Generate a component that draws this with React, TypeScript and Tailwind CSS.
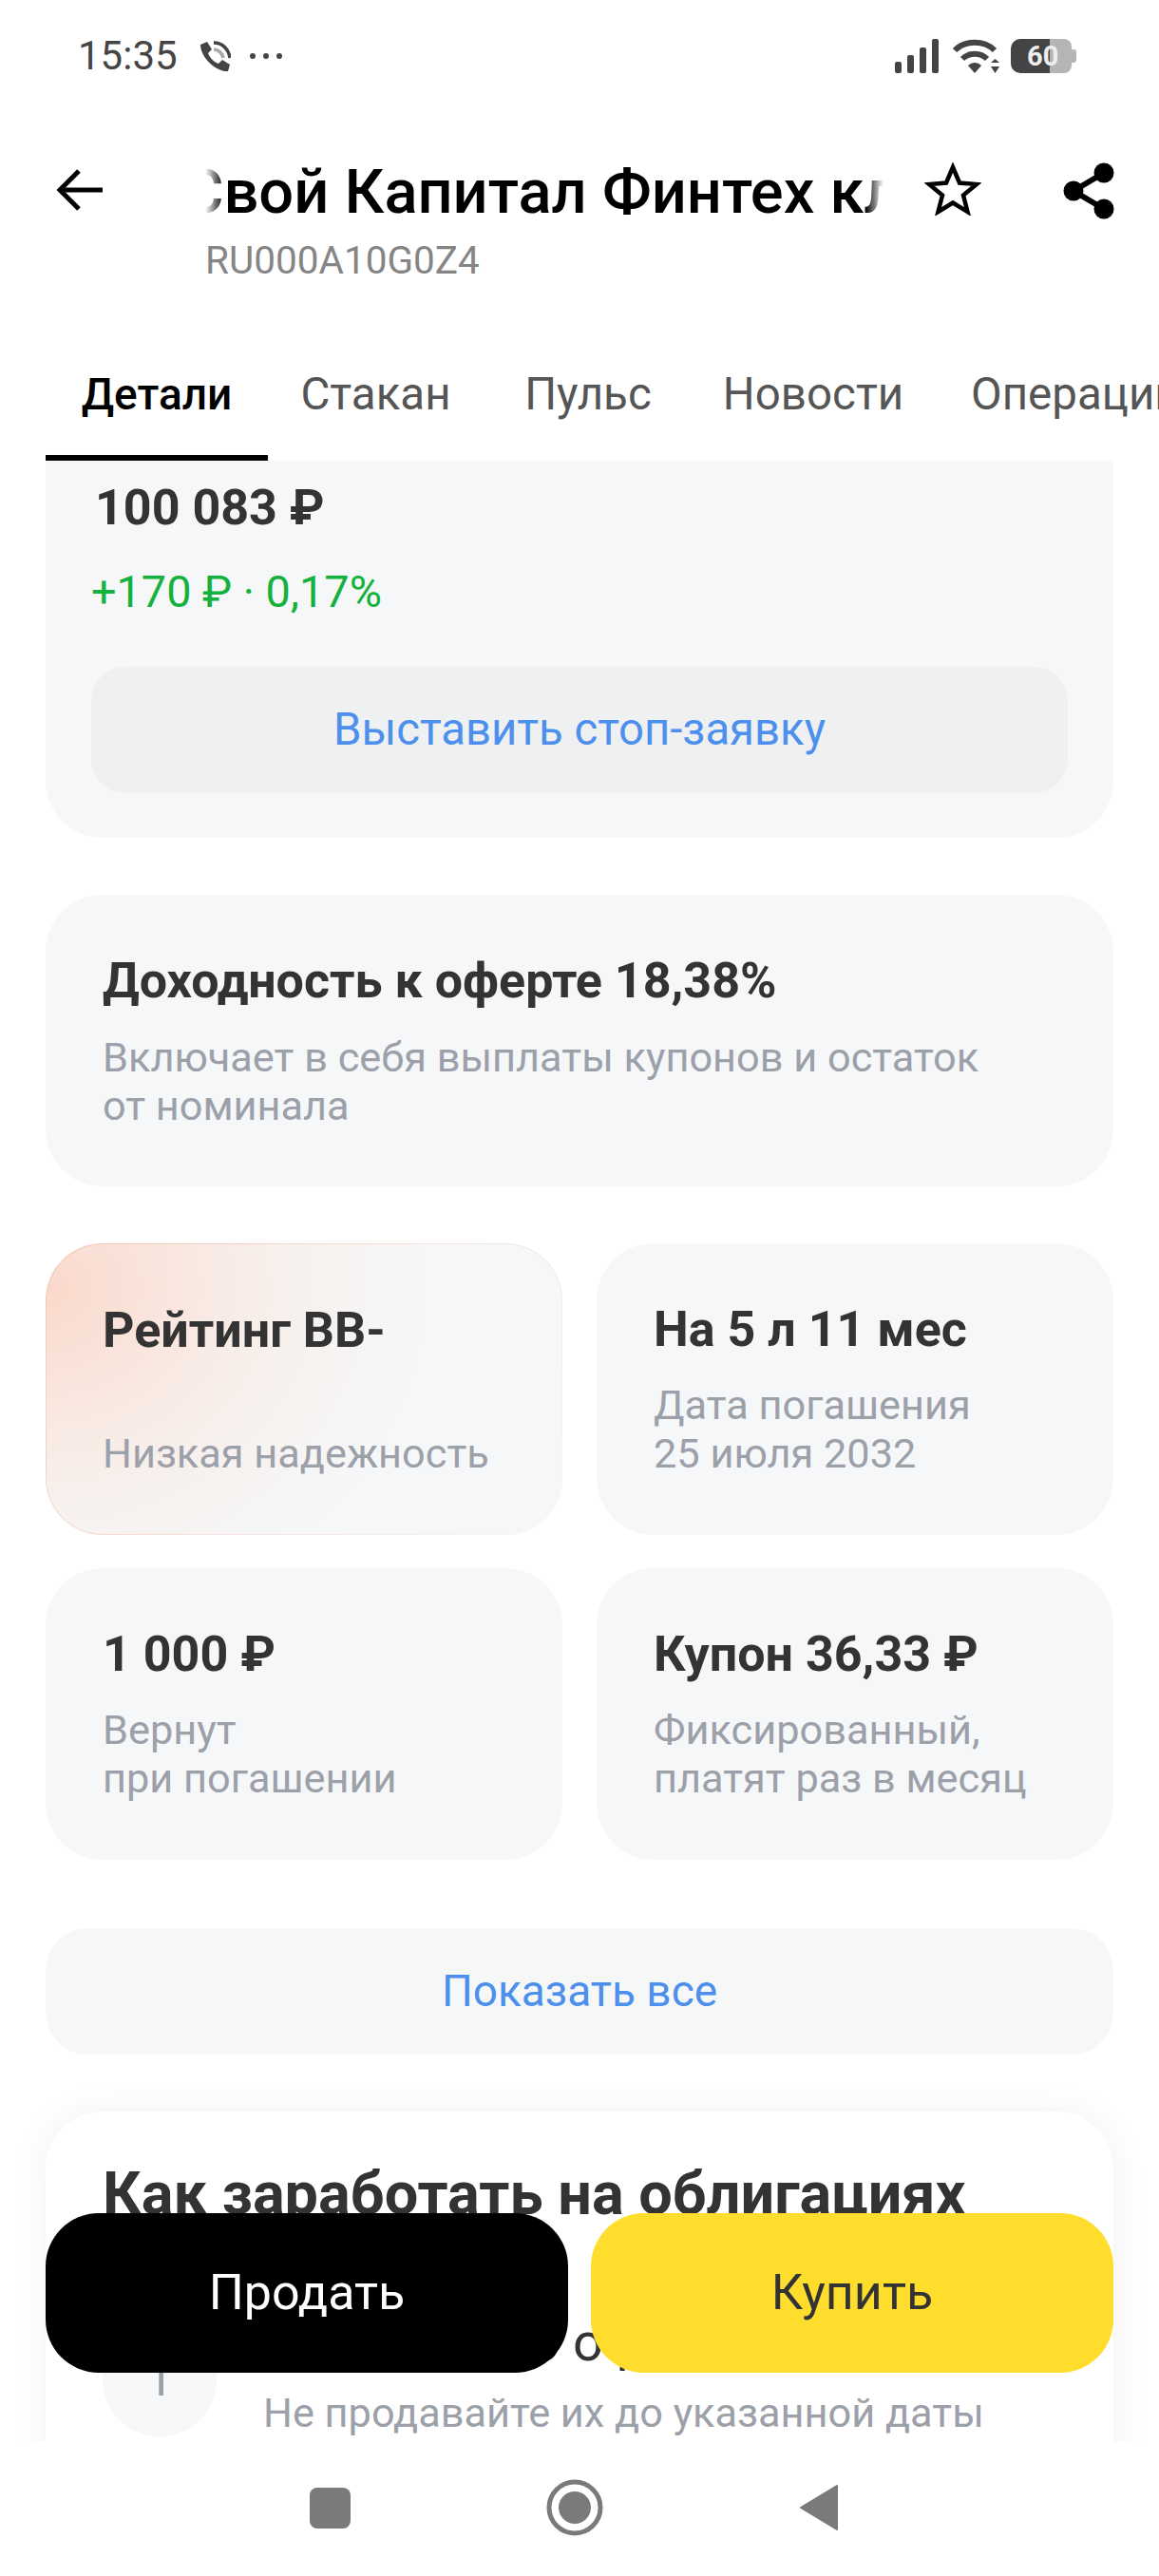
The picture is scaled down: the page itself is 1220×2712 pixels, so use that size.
import React from "react";

const font = "font-['Roboto','Noto_Sans',sans-serif]";

function CallIcon() {
  return (
    <svg width="33" height="33" viewBox="0 0 33 33" className="ml-[23px]">
      <path d="M1 4 L8 1 L13 9 L9 13 C11 18 15 22 20 24 L24 20 L32 25 L30 32 C18 33 1 18 1 4 Z" fill="#444" />
      <path d="M15 2 C24 2 31 9 32 18" stroke="#444" strokeWidth="3.5" fill="none" />
      <path d="M15 9 C20 9 24 13 25 18" stroke="#aaa" strokeWidth="3.5" fill="none" />
    </svg>
  );
}

function SignalIcon() {
  return (
    <svg width="46" height="36" viewBox="0 0 46 36">
      <rect x="0" y="24" width="7" height="12" rx="2" fill="#444" />
      <rect x="13" y="17" width="7" height="19" rx="2" fill="#444" />
      <rect x="26" y="9" width="7" height="27" rx="2" fill="#444" />
      <rect x="39" y="0" width="7" height="36" rx="2" fill="#444" />
    </svg>
  );
}

function WifiIcon() {
  return (
    <svg width="50" height="36" viewBox="0 0 50 36">
      <path d="M3 12 C14 1 34 1 45 12" stroke="#444" strokeWidth="6" fill="none" />
      <path d="M11 21 C18 14 30 14 37 21" stroke="#444" strokeWidth="6" fill="none" />
      <path d="M17 28 C21 24 27 24 31 28 L24 36 Z" fill="#444" />
      <path d="M41 25 L45.500 21 L50 25 Z M41 29 L50 29 L45.500 36 Z" fill="#444" />
    </svg>
  );
}

function BatteryIcon() {
  return (
    <div className="relative ml-[12px] flex h-[36px] w-[69px] items-center">
      <div className="h-full w-[41px] rounded-l-[10px] bg-[#444]" />
      <div className="h-full w-[23px] rounded-r-[8px] bg-[#b5b5b5]" />
      <div className="h-[14px] w-[5px] rounded-r-[3px] bg-[#b5b5b5]" />
      <span className="absolute left-[17px] top-0 text-[29px] leading-[36px] font-bold text-[#eee]">60</span>
    </div>
  );
}

function BackIcon() {
  return (
    <svg width="48" height="44" viewBox="0 0 48 44" fill="none" stroke="#000" strokeWidth="5">
      <path d="M23 2 L3 22 L23 42" />
      <path d="M3 22 L48 22" />
    </svg>
  );
}

function StarIcon() {
  return (
    <svg width="60" height="56" viewBox="0 0 60 56" fill="none" stroke="#000" strokeWidth="4.500">
      <path d="M30 5 L37 21.500 L55 23 L41 34.500 L45.500 52 L30 42.500 L14.500 52 L19 34.500 L5 23 L23 21.500 Z" />
    </svg>
  );
}

function ShareIcon() {
  return (
    <svg width="54" height="60" viewBox="0 0 54 60">
      <path d="M43 11 L11 30 L43 49" stroke="#000" strokeWidth="6" fill="none" />
      <circle cx="43" cy="11" r="10.500" fill="#000" />
      <circle cx="11" cy="30" r="10.500" fill="#000" />
      <circle cx="43" cy="49" r="10.500" fill="#000" />
    </svg>
  );
}

function InfoCard({ title, lines, gradient }: { title: string; lines: string[]; gradient?: boolean }) {
  return (
    <div
      className={`flex h-[307px] flex-col rounded-[60px] pt-[61px] ${
        gradient
          ? "border-[1.5px] border-transparent pl-[59px] [background:radial-gradient(ellipse_400px_350px_at_0%_15%,#fad9cb_0%,#f9e7e0_35%,#f7f1ee_65%,#f6f7f9_100%)_padding-box,linear-gradient(135deg,#f3c4b0,#f6e4dc_55%,#f6f7f9)_border-box]"
          : "bg-[#f6f7f9] pl-[60px]"
      }`}
    >
      <div className="whitespace-nowrap text-[52px] leading-[60px] font-bold text-[#333]">{title}</div>
      <div className={`text-[43.300px] leading-[51px] text-[#9ca0a9] ${gradient ? "mt-[74px]" : "mt-[24px]"}`}>
        {lines.map((l) => (
          <div key={l} className="whitespace-nowrap">{l}</div>
        ))}
      </div>
    </div>
  );
}

export default function App() {
  const tabs = [
    { name: "Детали", w: "w-[234px] text-center text-[46px]" },
    { name: "Стакан", w: "w-[227px] text-center text-[47.500px]" },
    { name: "Пульс", w: "w-[220px] text-center text-[47.500px]" },
    { name: "Новости", w: "w-[254px] text-center text-[47.500px]" },
    { name: "Операции", w: "w-[300px] pl-[39px] text-left text-[47.500px]" },
  ];

  return (
    <div className={`relative flex h-[2712px] w-[1220px] flex-col overflow-hidden bg-white ${font}`}>
      {/* status bar */}
      <div className="flex h-[118px] shrink-0 items-center justify-between pl-[82px] pr-[87px]">
        <div className="flex items-center">
          <span className="text-[42px] leading-none text-[#444]">15:35</span>
          <CallIcon />
          <div className="ml-[20px] flex gap-[8px]">
            <span className="size-[6px] rounded-full bg-[#444]" />
            <span className="size-[6px] rounded-full bg-[#444]" />
            <span className="size-[6px] rounded-full bg-[#444]" />
          </div>
        </div>
        <div className="flex items-center">
          <SignalIcon />
          <div className="ml-[14px]"><WifiIcon /></div>
          <BatteryIcon />
        </div>
      </div>

      {/* header */}
      <div className="flex h-[180px] shrink-0 items-start">
        <div className="ml-[60px] mt-[60px] shrink-0"><BackIcon /></div>
        <div className="ml-[108px] w-[714px] shrink-0">
          <div className="mt-[46px] overflow-hidden [mask-image:linear-gradient(to_right,transparent,black_20px,black_695px,transparent)]">
            <div className="-ml-[23px] whitespace-nowrap text-[65px] leading-[76px] font-medium text-black">
              Свой Капитал Финтех клуб
            </div>
          </div>
          <div className="mt-[11px] text-[40.500px] leading-[46px] text-[#858585]">RU000A10G0Z4</div>
        </div>
        <div className="ml-[43px] mt-[53px] shrink-0"><StarIcon /></div>
        <div className="ml-[86px] mt-[53px] shrink-0"><ShareIcon /></div>
      </div>

      {/* tabs */}
      <div className="flex h-[187px] shrink-0 items-end overflow-hidden pl-[48px]">
        {tabs.map((t, i) => (
          <div
            key={t.name}
            className={`${t.w} h-[107px] shrink-0 whitespace-nowrap pt-[10px] leading-[54px] ${
              i === 0 ? "border-b-[6px] border-black font-medium text-black" : "text-[#555]"
            }`}
          >
            {t.name}
          </div>
        ))}
      </div>

      {/* scroll content */}
      <div className="flex min-h-0 flex-1 flex-col overflow-hidden px-[48px]">
        <div className="shrink-0 rounded-b-[60px] bg-[#f5f7f9] px-[48px] pb-[47px]">
          <div className="pl-[4px] pt-[20px] text-[52px] leading-[60px] font-bold text-[#333]">100 083 ₽</div>
          <div className="mt-[31px] text-[46.800px] leading-[54px] text-[#12b23c]">+170 ₽ · 0,17%</div>
          <div className="mt-[52px] flex h-[133px] items-center justify-center rounded-[36px] bg-[#eef0f2] text-[47.300px] text-[#4d8fec]">
            Выставить стоп-заявку
          </div>
        </div>

        <div className="mt-[60px] h-[307px] shrink-0 rounded-[60px] bg-[#f5f7f9] px-[60px] pt-[61px]">
          <div className="whitespace-nowrap text-[52px] leading-[60px] font-bold text-[#333]">Доходность к оферте 18,38%</div>
          <div className="mt-[25px] text-[43.300px] leading-[51px] whitespace-nowrap text-[#9ca0a9]">
            Включает в себя выплаты купонов и остаток
            <br />
            от номинала
          </div>
        </div>

        <div className="mt-[60px] grid shrink-0 grid-cols-2 gap-x-[36px] gap-y-[35px]">
          <InfoCard title="Рейтинг BB-" lines={["Низкая надежность"]} gradient />
          <InfoCard title="На 5 л 11 мес" lines={["Дата погашения", "25 июля 2032"]} />
          <InfoCard title="1 000 ₽" lines={["Вернут", "при погашении"]} />
          <InfoCard title="Купон 36,33 ₽" lines={["Фиксированный,", "платят раз в месяц"]} />
        </div>

        <div className="mt-[72px] flex h-[133px] shrink-0 items-center justify-center rounded-[44px] bg-[#f6f8f8] text-[46px] text-[#4d8fec]">
          Показать все
        </div>

        <div className="mt-[60px] h-[420px] shrink-0 rounded-t-[60px] bg-white px-[60px] pt-[49px] shadow-[0_0_40px_rgba(0,0,0,0.06)]">
          <div className="whitespace-nowrap text-[63px] leading-[76px] font-bold text-[#333]">Как заработать на облигациях</div>
          <div className="mt-[97px] flex gap-[49px]">
            <div className="flex size-[120px] shrink-0 items-center justify-center rounded-full bg-[#f6f7f9] text-[52px] text-[#9ca0a9]">1</div>
            <div className="-mt-[9px] min-w-0">
              <div className="whitespace-nowrap text-[56px] leading-[60px] text-[#333]">Держите до оферты</div>
              <div className="mt-[19px] whitespace-nowrap text-[43.300px] leading-[51px] text-[#9ca0a9]">Не продавайте их до указанной даты</div>
            </div>
          </div>
        </div>
      </div>

      {/* floating buttons */}
      <div className="absolute left-[48px] right-[48px] top-[2330px] flex gap-[24px]">
        <div className="flex h-[168px] flex-1 items-center justify-center rounded-[56px] bg-black text-[52px] text-white">Продать</div>
        <div className="flex h-[168px] flex-1 items-center justify-center rounded-[56px] bg-[#ffdd2d] text-[52px] text-[#333]">Купить</div>
      </div>

      {/* android nav */}
      <div className="relative flex h-[142px] shrink-0 items-center justify-center bg-white pb-[2px] pr-[12px]">
        <div className="size-[43px] rounded-[8px] bg-[#7a7a7a]" />
        <svg width="60" height="60" viewBox="0 0 60 60" className="ml-[206px]">
          <circle cx="30" cy="30" r="27" stroke="#7a7a7a" strokeWidth="5" fill="none" />
          <circle cx="30" cy="30" r="17" fill="#7a7a7a" />
        </svg>
        <svg width="42" height="50" viewBox="0 0 42 50" className="ml-[206px]">
          <path d="M40 2 L40 48 L2 25 Z" fill="#7a7a7a" stroke="#7a7a7a" strokeWidth="2" strokeLinejoin="round" />
        </svg>
      </div>
    </div>
  );
}
